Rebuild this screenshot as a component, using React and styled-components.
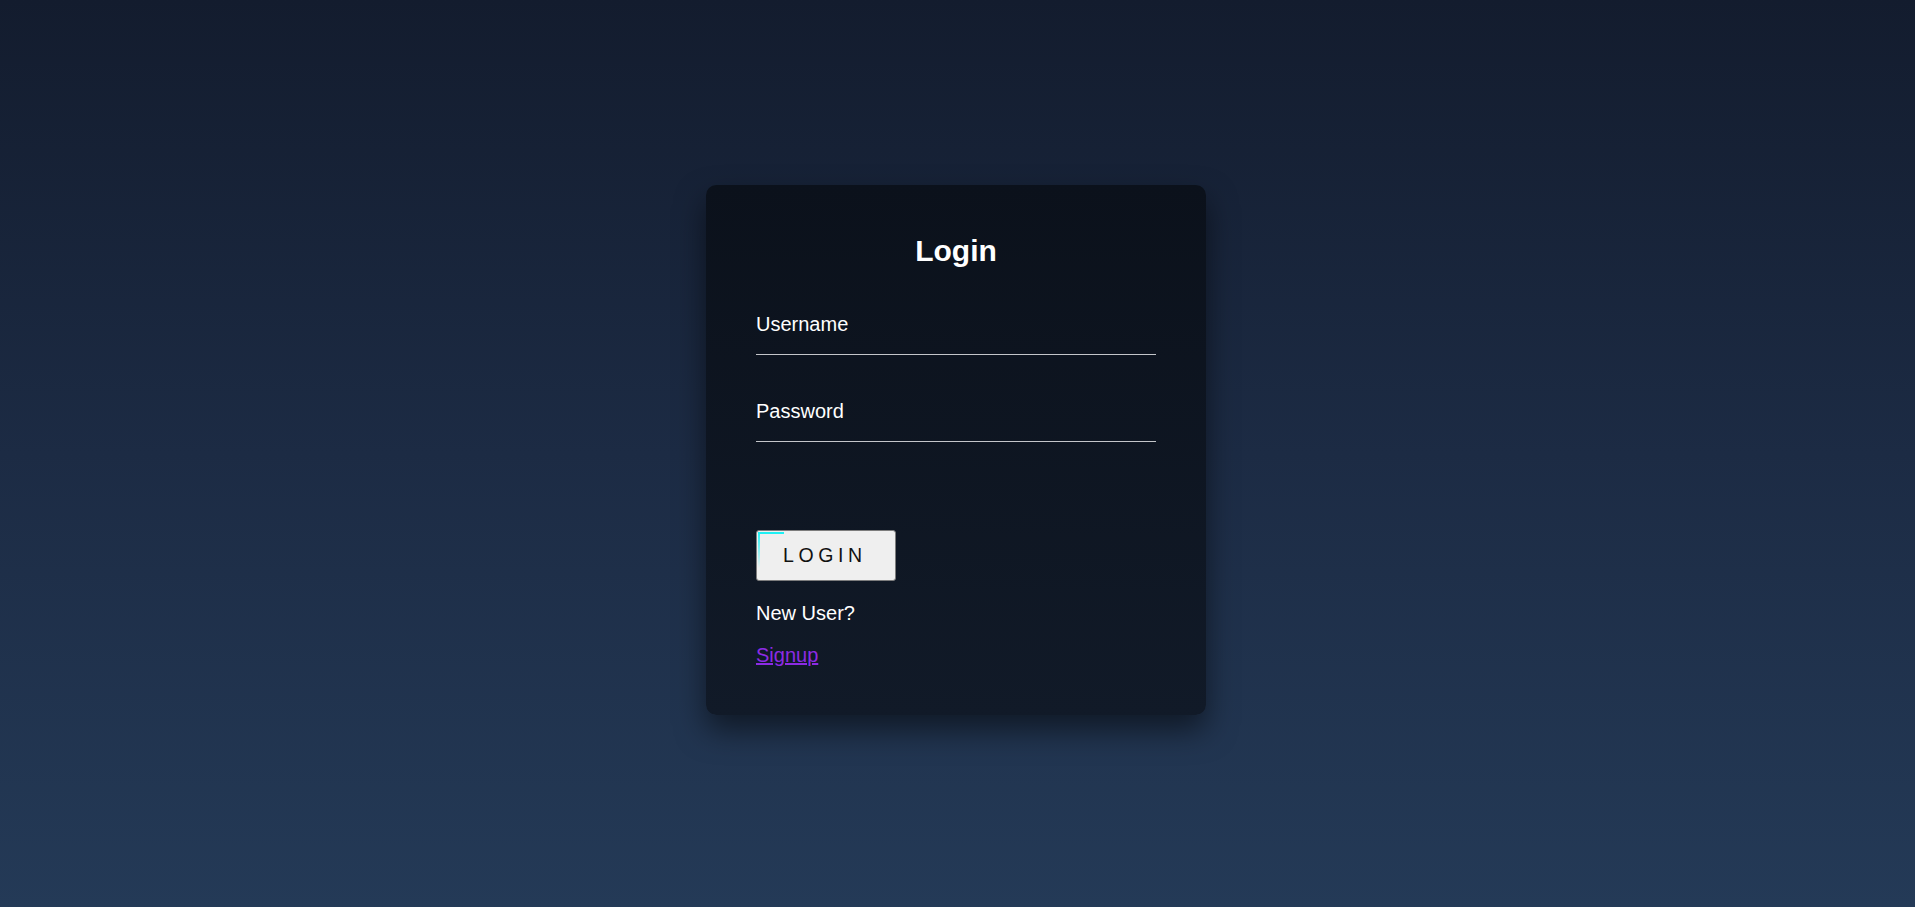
import React from 'react';
import styled, { createGlobalStyle } from 'styled-components';

const GlobalStyle = createGlobalStyle`
  * { box-sizing: border-box; }
  html, body {
    margin: 0;
    padding: 0;
    font-family: "Liberation Sans", Arial, sans-serif;
  }
`;

const Page = styled.div`
  min-height: 100vh;
  padding: 0 3px 7px 0;
  display: flex;
  align-items: center;
  justify-content: center;
  background: linear-gradient(to bottom, #131c2e 0%, #1c2b44 50%, #243a57 100%);
`;

const Card = styled.form`
  width: 500px;
  padding: 49px 50px 48px;
  border-radius: 10px;
  background: linear-gradient(to bottom, #0b111b, #111a28);
  box-shadow: 0 15px 30px rgba(0, 0, 0, 0.5);
  display: flex;
  flex-direction: column;
`;

const Title = styled.h1`
  margin: 0 0 45px;
  font-size: 30px;
  line-height: 34px;
  font-weight: 700;
  color: #ffffff;
  text-align: center;
`;

const Field = styled.div`
  position: relative;
  margin-bottom: ${({ $gap }) => $gap}px;
`;

const Input = styled.input`
  display: block;
  width: 100%;
  height: 42px;
  padding: 0 0 18px;
  font: inherit;
  font-size: 20px;
  line-height: 23px;
  color: #ffffff;
  background: transparent;
  border: none;
  border-bottom: 1px solid #c4c6ca;
  outline: none;
`;

const Label = styled.label`
  position: absolute;
  top: 0;
  left: 0;
  font-size: 20px;
  line-height: 23px;
  color: #ffffff;
  pointer-events: none;
`;

const Button = styled.button`
  position: relative;
  align-self: flex-start;
  width: 140px;
  height: 51px;
  padding: 0 0 0 26px;
  text-align: left;
  font-family: "Liberation Sans", Arial, sans-serif;
  font-size: 19.5px;
  letter-spacing: 4.6px;
  color: #111111;
  background: #efefef;
  border: 1px solid #7d7d7d;
  border-radius: 3px;
  cursor: pointer;
`;

const AccentTop = styled.span`
  position: absolute;
  top: 1px;
  left: 1px;
  width: 26px;
  height: 2px;
  background: #1ef0f4;
`;

const AccentSide = styled.span`
  position: absolute;
  top: 1px;
  left: 1px;
  width: 2px;
  height: 36px;
  background: linear-gradient(to bottom, #1ef0f4, rgba(30, 240, 244, 0));
`;

const Text = styled.p`
  margin: 21px 0 0;
  font-size: 20px;
  line-height: 23px;
  color: #ffffff;
`;

const SignupLink = styled.a`
  margin-top: 19px;
  align-self: flex-start;
  font-size: 20px;
  line-height: 23px;
  color: #8c2be4;
  text-decoration: underline;
`;

export default function App() {
  return (
    <>
      <GlobalStyle />
      <Page>
        <Card onSubmit={(e) => e.preventDefault()}>
          <Title>Login</Title>
          <Field $gap={45}>
            <Input id="username" type="text" />
            <Label htmlFor="username">Username</Label>
          </Field>
          <Field $gap={88}>
            <Input id="password" type="password" />
            <Label htmlFor="password">Password</Label>
          </Field>
          <Button type="submit">
            <AccentTop />
            <AccentSide />
            LOGIN
          </Button>
          <Text>New User?</Text>
          <SignupLink href="#signup">Signup</SignupLink>
        </Card>
      </Page>
    </>
  );
}
